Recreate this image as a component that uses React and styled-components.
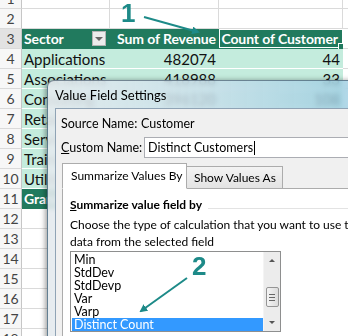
import styled, { createGlobalStyle } from 'styled-components';

const GlobalStyle = createGlobalStyle`
  * { box-sizing: border-box; }
  body { margin: 0; overflow: hidden; background: #fff; }
`;

const COLS = [88, 109, 124];

const rows = [
  { n: 1 },
  { n: 2 },
  { n: 3, kind: 'head', cells: ['Sector', 'Sum of Revenue', 'Count of Customer'] },
  { n: 4, kind: 'band', cells: ['Applications', '482074', '44'] },
  { n: 5, kind: 'band', cells: ['Associations', '418988', '33'] },
  { n: 6, kind: 'band', cells: ['Consulting', '396120', '108'] },
  { n: 7, kind: 'band', cells: ['Retail', '285744', '27'] },
  { n: 8, kind: 'band', cells: ['Services', '318265', '41'] },
  { n: 9, kind: 'band', cells: ['Training', '214532', '19'] },
  { n: 10, kind: 'band', cells: ['Utilities', '176410', '12'] },
  { n: 11, kind: 'head', cells: ['Grand Total', '2292055', '284'] },
  { n: 12 }, { n: 13 }, { n: 14 }, { n: 15 }, { n: 16 }, { n: 17 }, { n: 18 },
];

const Page = styled.div`
  position: relative;
  width: 348px;
  height: 336px;
  overflow: hidden;
  font-family: Lato, "Liberation Sans", sans-serif;
`;

const Sheet = styled.div`
  display: flex;
  flex-direction: column;
  margin-top: -11px;
`;

const Row = styled.div`
  display: flex;
  height: 20px;
  flex-shrink: 0;
`;

const RowHead = styled.div`
  width: 22px;
  flex-shrink: 0;
  display: flex;
  align-items: center;
  justify-content: center;
  font-size: 14px;
  color: #444;
  background: ${p => (p.$active ? '#e2e2e2' : '#f7f7f7')};
  border-right: 1px solid #c6c6c6;
  border-bottom: 1px solid #dadada;
`;

const Cell = styled.div`
  position: relative;
  width: ${p => p.$w}px;
  flex: ${p => (p.$grow ? 1 : 'none')};
  display: flex;
  align-items: center;
  justify-content: ${p => (p.$right ? 'flex-end' : 'flex-start')};
  padding: 0 3px 0 2px;
  font-size: 15px;
  white-space: nowrap;
  color: #111;
  background: #fff;
  border-right: 1px solid #dadada;
  border-bottom: 1px solid #dadada;

  ${p => p.$kind === 'head' && `
    background: #217a5e;
    color: #fff;
    font-weight: 700;
    font-size: 14px;
    letter-spacing: -0.1px;
    border-right: none;
    border-bottom: 1px solid #217a5e;
  `}
  ${p => p.$kind === 'band' && `
    background: #c4ecdd;
    border-right: none;
    border-bottom: 1px solid #fff;
  `}
  ${p => p.$selected && `
    padding-right: 5px;
    box-shadow: inset 0 0 0 1px #fff;
    &::after {
      content: '';
      position: absolute;
      right: -3px;
      bottom: -3px;
      width: 6px;
      height: 6px;
      background: #217a5e;
      border: 1px solid #fff;
    }
  `}
`;

const SortButton = styled.span`
  margin-left: auto;
  margin-right: 1px;
  width: 14px;
  height: 15px;
  background: #ececec;
  border: 1px solid #b5b5b5;
  display: flex;
  align-items: center;
  justify-content: center;

  &::before {
    content: '';
    border-left: 4px solid transparent;
    border-right: 4px solid transparent;
    border-top: 4px solid #666;
  }
`;

const Dialog = styled.div`
  position: absolute;
  left: 47px;
  top: 80px;
  width: 320px;
  height: 270px;
  display: flex;
  flex-direction: column;
  padding-left: 7px;
  border: 1px solid rgba(50, 70, 90, 0.6);
  border-radius: 7px 7px 0 0;
  background: linear-gradient(90deg, rgba(228, 234, 238, 0.9) 0%, rgba(200, 222, 234, 0.82) 50%, rgba(150, 202, 224, 0.78) 100%);
  backdrop-filter: blur(2.5px);
  box-shadow: -2px 0 5px rgba(0, 0, 0, 0.35);
  font-family: Lato, "Open Sans", sans-serif;
  font-size: 12px;
  color: #000;
`;

const TitleBar = styled.div`
  height: 27px;
  display: flex;
  align-items: center;
  font-size: 13px;
`;

const Client = styled.div`
  flex: 1;
  display: flex;
  flex-direction: column;
  padding: 6px 0 0 5px;
  background: #f0f0f0;
  border-top: 1px solid #8fa3b5;
  border-left: 1px solid #8fa3b5;
`;

const FieldRow = styled.div`
  display: flex;
  align-items: center;
  height: ${p => p.$h}px;
  margin-top: ${p => p.$mt || 0}px;
  font-size: 12.5px;
  white-space: nowrap;
`;

const Label = styled.span`
  width: ${p => p.$w}px;
  flex-shrink: 0;
`;

const Underline = styled.span`
  text-decoration: underline;
`;

const TextBox = styled.div`
  flex: 1;
  height: 100%;
  display: flex;
  align-items: center;
  padding-left: 3px;
  background: #fff;
  border: 1px solid #abadb3;
  border-right: none;
`;

const Caret = styled.span`
  width: 1px;
  height: 14px;
  background: #000;
  margin-left: 1px;
`;

const TabStrip = styled.div`
  display: flex;
  align-items: flex-end;
  margin: 4px 0 0 1px;
  height: 26px;
  position: relative;
  z-index: 1;
  white-space: nowrap;
`;

const Tab = styled.div`
  height: ${p => (p.$active ? 26 : 22)}px;
  display: flex;
  align-items: center;
  padding: ${p => (p.$active ? '0 0 2px 8px' : '0 0 0 7px')};
  width: ${p => p.$w}px;
  border: 1px solid #acacac;
  border-bottom: ${p => (p.$active ? '1px solid #fff' : 'none')};
  border-left: ${p => (p.$first ? '1px solid #acacac' : 'none')};
  background: ${p => (p.$active ? '#fff' : 'linear-gradient(#f3f3f3, #e3e3e3)')};
  margin-bottom: ${p => (p.$active ? -1 : 0)}px;
`;

const Panel = styled.div`
  flex: 1;
  margin-left: 1px;
  padding: 7px 0 0 7px;
  background: #fff;
  border-top: 1px solid #acacac;
  border-left: 1px solid #acacac;
`;

const GroupHead = styled.div`
  display: flex;
  align-items: center;
  height: 16px;
  font-weight: 700;
  white-space: nowrap;

  &::after {
    content: '';
    flex: 1;
    margin: 9px 0 0 6px;
    border-top: 1px solid #e3e3e3;
  }
`;

const Hint = styled.p`
  margin: 4px 0 0;
  line-height: 17px;
  white-space: nowrap;
`;

const ListBox = styled.div`
  display: flex;
  width: 211px;
  height: 81px;
  margin-top: 1px;
  border: 1px solid #8e8f8f;
  background: #fff;
`;

const Items = styled.div`
  flex: 1;
  display: flex;
  flex-direction: column;
  padding: 1px 0 0 1px;
  font-size: 12.5px;
`;

const Item = styled.div`
  height: 13px;
  line-height: 13px;
  padding-left: 2px;
  background: ${p => (p.$selected ? '#3399ff' : 'transparent')};
  color: ${p => (p.$selected ? '#fff' : '#000')};
`;

const ScrollBar = styled.div`
  width: 17px;
  display: flex;
  flex-direction: column;
  background: #ececec;
  border-left: 1px solid #f4f4f4;
`;

const ScrollArrow = styled.div`
  height: 17px;
  display: flex;
  align-items: center;
  justify-content: center;

  &::before {
    content: '';
    border-left: 3px solid transparent;
    border-right: 3px solid transparent;
    ${p => (p.$up ? 'border-bottom: 3px solid #555;' : 'border-top: 3px solid #555;')}
  }
`;

const Track = styled.div`
  flex: 1;
  display: flex;
  justify-content: center;
`;

const Thumb = styled.div`
  margin-top: 18px;
  width: 13px;
  height: 20px;
  border: 1px solid #959595;
  border-radius: 2px;
  background: linear-gradient(90deg, #f4f4f4, #dcdcdc);
  display: flex;
  flex-direction: column;
  align-items: center;
  justify-content: center;
  gap: 2px;
`;

const Grip = styled.span`
  width: 6px;
  height: 1px;
  background: #666;
`;

const Marks = styled.svg`
  position: absolute;
  left: 0;
  top: 0;
  pointer-events: none;
`;

const calcItems = ['Min', 'StdDev', 'StdDevp', 'Var', 'Varp', 'Distinct Count'];

function SheetRow({ row }) {
  const cells = row.cells || [];
  return (
    <Row>
      <RowHead $active={row.n === 3}>{row.n}</RowHead>
      {COLS.map((w, i) => (
        <Cell
          key={i}
          $w={w}
          $kind={row.kind}
          $right={i > 0}
          $selected={row.n === 3 && i === 2}
        >
          {cells[i]}
          {row.n === 3 && i === 0 && <SortButton />}
        </Cell>
      ))}
      <Cell $grow />
    </Row>
  );
}

export default function App() {
  return (
    <Page>
      <GlobalStyle />
      <Sheet>
        {rows.map(r => (
          <SheetRow key={r.n} row={r} />
        ))}
      </Sheet>

      <Dialog>
        <TitleBar>Value Field Settings</TitleBar>
        <Client>
          <FieldRow $h={16}>
            <Label $w={80}>Source Name:</Label>
            <span>Customer</span>
          </FieldRow>
          <FieldRow $h={21} $mt={6}>
            <Label $w={83}>
              <Underline>C</Underline>ustom Name:
            </Label>
            <TextBox>
              Distinct Customers
              <Caret />
            </TextBox>
          </FieldRow>
          <TabStrip>
            <Tab $active $first $w={125}>Summarize Values By</Tab>
            <Tab $w={96}>Show Values As</Tab>
          </TabStrip>
          <Panel>
            <GroupHead>
              <span>
                <Underline>S</Underline>ummarize value field by
              </span>
            </GroupHead>
            <Hint>
              Choose the type of calculation that you want to use to summarize
              <br />
              data from the selected field
            </Hint>
            <ListBox>
              <Items>
                {calcItems.map(it => (
                  <Item key={it} $selected={it === 'Distinct Count'}>
                    {it}
                  </Item>
                ))}
              </Items>
              <ScrollBar>
                <ScrollArrow $up />
                <Track>
                  <Thumb>
                    <Grip />
                    <Grip />
                    <Grip />
                  </Thumb>
                </Track>
                <ScrollArrow />
              </ScrollBar>
            </ListBox>
          </Panel>
        </Client>
      </Dialog>

      <Marks width="348" height="336" viewBox="0 0 348 336">
        <defs>
          <marker id="head" markerWidth="8" markerHeight="8" refX="6" refY="4" orient="auto" markerUnits="userSpaceOnUse">
            <path d="M0,0 L8,4 L0,8 Z" fill="#1d8a88" />
          </marker>
        </defs>
        <text x="121" y="22" fill="#1d8a88" fontFamily="Liberation Sans, Arial, sans-serif" fontWeight="700" fontSize="26">1</text>
        <line x1="144" y1="17" x2="198" y2="32" stroke="#1d8a88" strokeWidth="2" markerEnd="url(#head)" />
        <text x="192" y="275" fill="#1d8a88" fontFamily="Liberation Sans, Arial, sans-serif" fontWeight="700" fontSize="26">2</text>
        <line x1="187" y1="278" x2="141" y2="311" stroke="#1d8a88" strokeWidth="2" markerEnd="url(#head)" />
      </Marks>
    </Page>
  );
}
